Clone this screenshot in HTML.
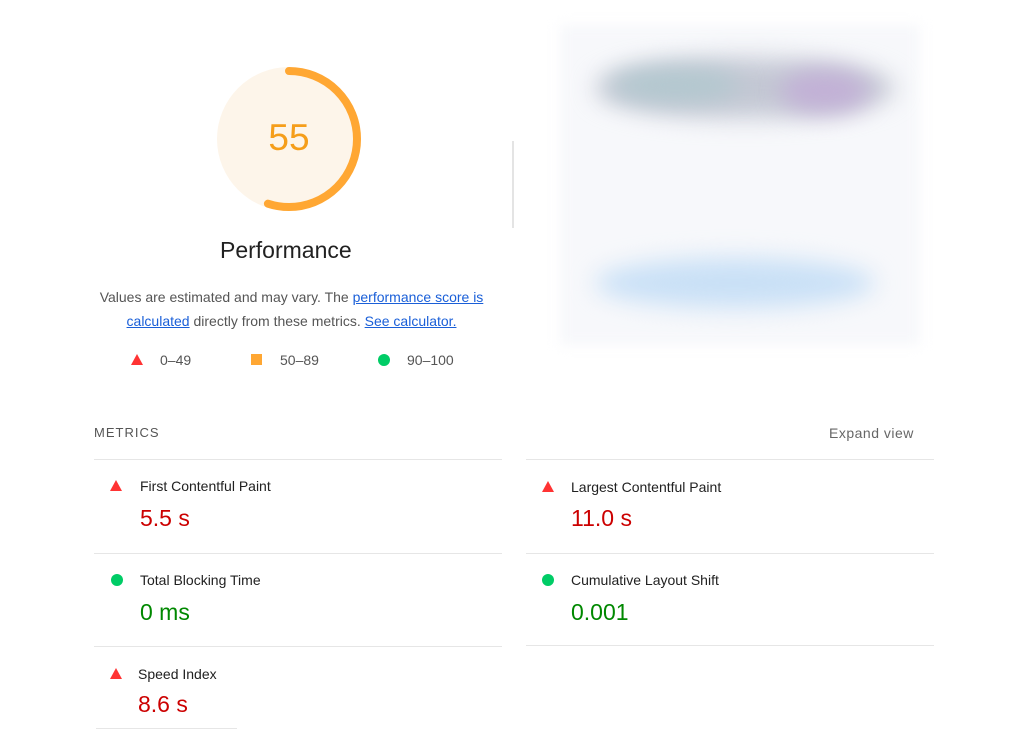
<!DOCTYPE html>
<html><head><meta charset="utf-8"><style>
body{margin:0;width:1024px;height:738px;background:#fff;font-family:"Liberation Sans",sans-serif;position:relative;overflow:hidden;color:#212121}
.a{position:absolute;white-space:nowrap}
.line{position:absolute;height:1px;background:#e6e6e6}
.lab{font-size:14px;color:#212121}
.val{font-size:23px}
.red{color:#c00}.grn{color:#080}
.tri{position:absolute;width:0;height:0;border-left:6px solid transparent;border-right:6px solid transparent;border-bottom:11px solid #f33}
.dot{position:absolute;width:12px;height:12px;border-radius:50%;background:#0c6}
a{color:#1a5fd8;text-decoration:underline}
.blob{position:absolute;border-radius:50%;filter:blur(12px)}
</style></head><body>
<svg class="a" style="left:213px;top:63px" width="152" height="152" viewBox="0 0 152 152">
<circle cx="76" cy="76" r="72" fill="#fdf5ea"/>
<circle cx="76" cy="76" r="68" fill="none" stroke="#ffa733" stroke-width="8" stroke-linecap="round" stroke-dasharray="235 500" transform="rotate(-90 76 76)"/>
<text x="76" y="87" text-anchor="middle" font-family="Liberation Sans" font-size="37" fill="#f59e1b">55</text>
</svg>
<div class="a" style="left:512px;top:141px;width:2px;height:87px;background:#e4e4e4"></div>
<div class="a" style="left:220px;top:237px;font-size:23px;color:#212121">Performance</div>
<div class="a" style="left:0;width:583px;top:285px;text-align:center;font-size:14px;color:#555;line-height:24px;white-space:normal">
<div style="width:400px;margin:0 auto">Values are estimated and may vary. The <a>performance score is calculated</a> directly from these metrics. <a>See calculator.</a></div></div>
<div class="tri" style="left:131px;top:354px"></div><div class="a" style="left:160px;top:352px;font-size:14px;color:#555">0–49</div>
<div class="a" style="left:251px;top:354px;width:11px;height:11px;background:#ffa733"></div><div class="a" style="left:280px;top:352px;font-size:14px;color:#555">50–89</div>
<div class="dot" style="left:378px;top:354px"></div><div class="a" style="left:407px;top:352px;font-size:14px;color:#555">90–100</div>

<div class="a" style="left:560px;top:25px;width:360px;height:320px;background:#f7f8fb;filter:blur(6px)"></div>
<div class="blob" style="left:595px;top:58px;width:300px;height:60px;background:#c4c8d4"></div>
<div class="blob" style="left:610px;top:68px;width:130px;height:34px;background:#b2c8cf"></div>
<div class="blob" style="left:780px;top:70px;width:90px;height:42px;background:#c2b0d6"></div>
<div class="blob" style="left:595px;top:258px;width:280px;height:50px;background:#c9e0f6"></div>

<div class="a" style="left:94px;top:425px;font-size:13px;letter-spacing:1px;color:#555">METRICS</div>
<div class="a" style="left:829px;top:425px;font-size:14px;letter-spacing:.5px;color:#666">Expand view</div>
<div class="line" style="left:94px;width:408px;top:459px"></div>
<div class="line" style="left:526px;width:408px;top:459px"></div>
<div class="line" style="left:94px;width:408px;top:553px"></div>
<div class="line" style="left:526px;width:408px;top:553px"></div>
<div class="line" style="left:94px;width:408px;top:646px"></div>
<div class="line" style="left:526px;width:408px;top:645px"></div>
<div class="line" style="left:96px;width:141px;top:728px"></div>

<div class="tri" style="left:110px;top:480px"></div><div class="a lab" style="left:140px;top:478px">First Contentful Paint</div><div class="a val red" style="left:140px;top:505px">5.5 s</div>
<div class="dot" style="left:111px;top:574px"></div><div class="a lab" style="left:140px;top:572px">Total Blocking Time</div><div class="a val grn" style="left:140px;top:599px">0 ms</div>
<div class="tri" style="left:110px;top:668px"></div><div class="a lab" style="left:138px;top:666px">Speed Index</div><div class="a val red" style="left:138px;top:691px">8.6 s</div>
<div class="tri" style="left:542px;top:481px"></div><div class="a lab" style="left:571px;top:479px">Largest Contentful Paint</div><div class="a val red" style="left:571px;top:505px">11.0 s</div>
<div class="dot" style="left:542px;top:574px"></div><div class="a lab" style="left:571px;top:572px">Cumulative Layout Shift</div><div class="a val grn" style="left:571px;top:599px">0.001</div>
</body></html>
